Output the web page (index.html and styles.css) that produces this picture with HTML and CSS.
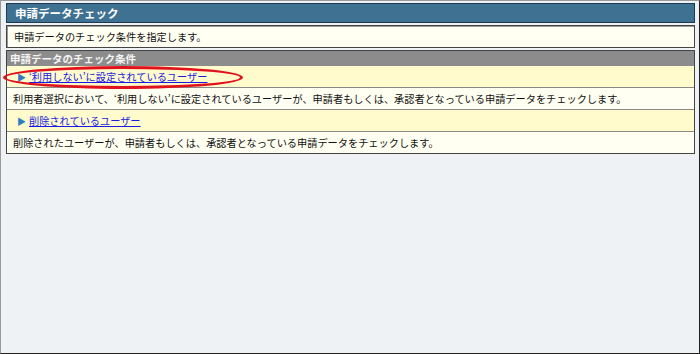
FILE: index.html
```html
<!DOCTYPE html>
<html lang="ja">
<head>
  <meta charset="UTF-8">
  <title>申請データチェック</title>
  <link rel="stylesheet" href="styles.css">
</head>
<body>
  <div class="frame">
    <!-- タイトル -->
    <div class="title-bar">申請データチェック</div>
    <div class="desc-box">申請データのチェック条件を指定します。</div>

    <!-- チェック条件 -->
    <div class="section">
      <div class="section-head">申請データのチェック条件</div>
      <div class="link-row mark">
        <span class="arrow">▶</span><a href="#">‘利用しない’に設定されているユーザー</a>
        <span class="ring"></span>
      </div>
      <div class="text-row">利用者選択において、‘利用しない’に設定されているユーザーが、申請者もしくは、承認者となっている申請データをチェックします。</div>
      <div class="link-row">
        <span class="arrow">▶</span><a href="#">削除されているユーザー</a>
      </div>
      <div class="text-row">削除されたユーザーが、申請者もしくは、承認者となっている申請データをチェックします。</div>
    </div>
  </div>
</body>
</html>
```

FILE: styles.css
```css
html, body {
  margin: 0;
  height: 100%;
}
body {
  font-family: "Noto Sans CJK JP", "Noto Sans", sans-serif;
  font-size: 10.2px;
  color: #111;
  background-color: #eef2f5;
}
.frame {
  box-sizing: border-box;
  height: 354px;
  padding: 2px 4px 0 5px;
  border: 1px solid #222;
  border-top-color: #999;
  border-left-color: #999;
  background-color: #eef2f5;
}
.title-bar {
  height: 18px;
  line-height: 18px;
  padding-left: 8px;
  background-color: #3f7193;
  border: 1px solid #1d3a50;
  color: #fff;
  font-weight: bold;
  font-size: 11.5px;
}
.desc-box {
  margin-top: 2px;
  height: 21px;
  line-height: 21px;
  padding-left: 7px;
  background-color: #fffff2;
  border: 1px solid #444;
  box-shadow: inset 1px 1px 0 #999;
}
.section {
  margin-top: 2px;
  border: 1px solid #444;
  background-color: #fffff2;
}
.section-head {
  height: 15px;
  line-height: 15px;
  padding-left: 3px;
  background-color: #8c8c8c;
  color: #f4f4f4;
  font-weight: bold;
  font-size: 10.5px;
}
.link-row {
  position: relative;
  height: 21px;
  line-height: 21px;
  padding-left: 10px;
  background-color: #fffbcc;
  border-bottom: 1px solid #888;
}
.link-row a {
  color: #1a1ae0;
  text-decoration: underline;
}
.arrow {
  display: inline-block;
  width: 12px;
  color: #2f7cc1;
  font-size: 9px;
  vertical-align: 0;
}
.text-row {
  height: 21px;
  line-height: 21px;
  padding-left: 6px;
  border-bottom: 1px solid #888;
}
.text-row:last-child {
  border-bottom: none;
}
.ring {
  position: absolute;
  left: -4px;
  top: 0;
  width: 234px;
  height: 17px;
  border: 3px solid #e0121b;
  border-radius: 50%;
  pointer-events: none;
}
```
